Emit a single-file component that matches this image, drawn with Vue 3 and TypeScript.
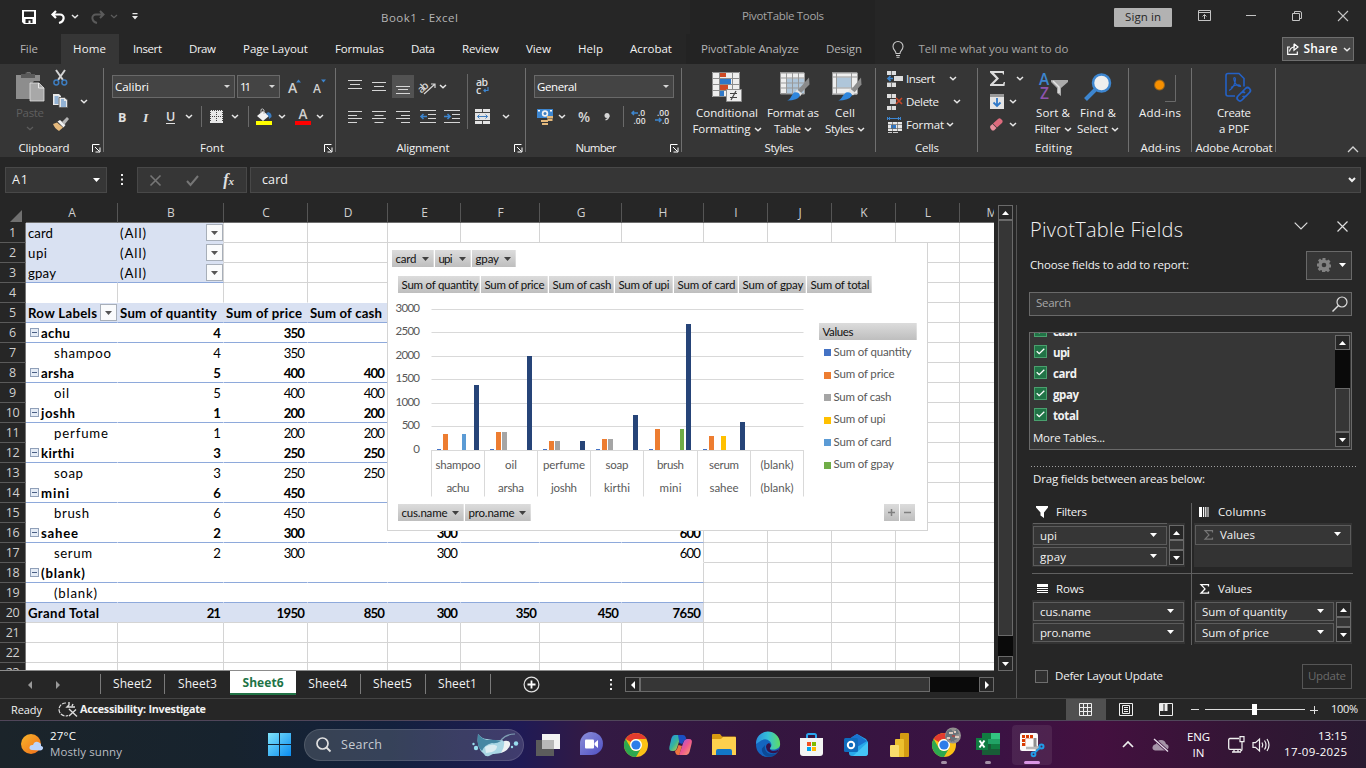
<script setup lang="ts">
import { h } from 'vue'
import type { FunctionalComponent, Directive } from 'vue'

/* Adjusts letter spacing so a label takes the given width in pixels. */
const vFit: Directive<HTMLElement, number> = {
  mounted(el, binding) {
    const len = (el.textContent || '').trim().length
    if (!binding.value || len < 2) return
    el.style.display = 'inline-block'
    el.style.whiteSpace = 'nowrap'
    const natural = el.getBoundingClientRect().width
    const ls = (binding.value - natural) / (len - 1)
    el.style.letterSpacing = ls + 'px'
    el.style.marginRight = -ls + 'px'
  },
}

const line = (d: string, c = '#d6d6d6', w = 1) => `<path d="${d}" fill="none" stroke="${c}" stroke-width="${w}"/>`
const chromeArt = `<circle cx="12" cy="12" r="12" fill="#fbc116"/><path d="M1.6 6A12 12 0 0 1 22.4 6H12a6 6 0 0 0-5.2 3z" fill="#e33b2e"/><path d="M1.6 6A12 12 0 0 0 12 24l5.2-9A6 6 0 0 1 6.8 15z" fill="#2da94f"/><circle cx="12" cy="12" r="6" fill="#fff"/><circle cx="12" cy="12" r="4.6" fill="#2f7de9"/>`

const icons: Record<string, [number, number, string]> = {
  save: [14, 14, '<path d="M0 0h14v14H2l-2-2z" fill="#fff"/><path d="M2 1.500h10V7H2zM3.500 9h7v4h-2v-2.500h-2V13h-3z" fill="#262626"/>'],
  undo: [15, 14, line('M5 1L1.500 4.500 5 8M2 4.500h7c5 0 5 7-1 8.500', '#fff', 2.2)],
  redo: [15, 14, line('M10 1l3.500 3.500L10 8M13 4.500H6c-5 0-5 7 1 8.500', '#5a5a5a', 2)],
  chev: [8, 5, line('M1 1l3 2.700L7 1', '#e8e8e8', 1.5)],
  chevDim: [8, 5, line('M1 1l3 2.700L7 1', '#5c5c5c', 1.3)],
  qat: [6, 7, '<path d="M.5 0h5v1.300h-5zM0 3h6L3 6.500z" fill="#e8e8e8"/>'],
  tri: [7, 4, '<path d="M0 0h7L3.500 4z" fill="#fff"/>'],
  triS: [6, 3, '<path d="M0 0h6L3 3z" fill="#d6d6d6"/>'],
  triUp: [7, 4, '<path d="M0 4h7L3.500 0z" fill="#fff"/>'],
  triL: [4, 8, '<path d="M4 0v8L0 4z" fill="#fff"/>'],
  triR: [4, 8, '<path d="M0 0v8l4-4z" fill="#fff"/>'],
  navL: [4, 8, '<path d="M4 0v8L0 4z" fill="#999"/>'],
  navR: [4, 8, '<path d="M0 0v8l4-4z" fill="#999"/>'],
  ribbonOpt: [13, 11, line('M.5.500h12v10H.5zM.5 2.500h12M6.500 9V4.500M4.500 6.500l2-2 2 2', '#c4c4c4')],
  min: [10, 2, line('M0 .5h10', '#c4c4c4')],
  restore: [10, 10, line('M.5 2.500h7v7h-7zM2.500 2V.5H8a1.500 1.500 0 0 1 1.500 1.500v5.500H8', '#c4c4c4')],
  close: [10, 10, line('M0 0l10 10M10 0L0 10', '#c4c4c4', 1.1)],
  bulb: [12, 17, line('M4 12.500C4 9.500 1 9 1 5.500a5 5 0 0 1 10 0c0 3.500-3 4-3 7zM4 14.500h4M4.500 16.200h3', '#c8c8c8', 1.1)],
  share: [12, 12, line('M3 4H.7v7.300h9.600V8.500M2.500 8.500C3 5.500 5 4 8 4M7 .700L11 4 7 7.300V.700', '#fff', 1.2)],
  paste: [28, 30, '<path d="M0 3h7V2h3l1-2h3l1 2h2v1h7v6h-6l-4 5v13H0z" fill="#8d8d8d"/><path d="M5 2h4.500V.5h5V2H19v4H5z" fill="#5a5a5a"/><path d="M14 11h9l5 5v13H14z" fill="#a8a8a8" stroke="#e0e0e0" stroke-width=".8"/><path d="M22.500 11v5H28" fill="none" stroke="#e8e8e8"/>'],
  cut: [15, 16, line('M3 0l7 10M12 0L5 10', '#d4d4d4', 2) + '<circle cx="3.300" cy="12.500" r="2.400" fill="none" stroke="#3d7dc0" stroke-width="1.500"/><circle cx="11.300" cy="12.500" r="2.400" fill="none" stroke="#3d7dc0" stroke-width="1.500"/>'],
  copy: [15, 14, '<path d="M0 0h6l2 2v9H0z" fill="#e8e8e8"/><path d="M1.500 3h4M1.500 5h4M1.500 7h4M1.500 9h4" stroke="#3d7dc0"/><path d="M6 3.500h5.500L14.500 6v7.500H6z" fill="#e8e8e8" stroke="#555" stroke-width=".8"/><path d="M8 6h3M8 8h5M8 10h5M8 12h5" stroke="#3d7dc0"/>'],
  brush: [16, 14, '<path d="M0 7l4-1.500 6 5L6 14C3 12 1 10 0 7z" fill="#e5b97c"/><path d="M4.500 4.500L7 3l5.500 5-2 2.500z" fill="#f0f0f0"/><path d="M9 5l5-5 2 2-4.500 5.500z" fill="#b5b5b5"/>'],
  launch: [9, 9, line('M.5 8V.5h7M3 3l4.500 4.500M8 3.500V8H3.500', '#fff', 1)],
  growA: [13, 17, '<text x="0" y="15" font-family="Open Sans" font-weight="600" font-size="14" fill="#d0d0d0">A</text><path d="M8 4.500l2.500-3 2.500 3z" fill="#3d86d0"/>'],
  shrinkA: [13, 17, '<text x="0" y="15" font-family="Open Sans" font-weight="600" font-size="12" fill="#d0d0d0">A</text><path d="M8 1.500h5l-2.500 3z" fill="#3d86d0"/>'],
  bold: [9, 14, '<text x="0" y="11.500" font-family="Open Sans" font-weight="700" font-size="12.500" fill="#e0e0e0">B</text>'],
  italic: [8, 14, '<text x="0" y="11.500" font-family="Liberation Serif" font-style="italic" font-weight="700" font-size="13.500" fill="#e0e0e0" textLength="6.500">I</text>'],
  underline: [9, 16, '<text x="0" y="11.500" font-family="Open Sans" font-weight="600" font-size="12.500" fill="#e0e0e0">U</text><path d="M0 14.500h9" stroke="#e0e0e0"/>'],
  sepS: [1, 21, '<path d="M.5 0v21" stroke="#6a6a6a"/>'],
  borders: [14, 14, '<path d="M0 0h13v13H0z" fill="#e8e8e8"/><path d="M0 .5h14M6.500 0v12M0 6.500h13M.5 0v12M12.500 0v12" stroke="#444" stroke-dasharray="1 1"/>'],
  fill: [16, 17, '<path d="M7 3l6 5-6 5-6-5z" fill="#f2f2f2"/><path d="M5 5V1.500Q6.500 0 8 2v4" fill="none" stroke="#bbb"/><path d="M12 4q4 1 3.500 5l-2.500 2q0-4-3-5z" fill="#3d7dc0"/><path d="M0 13h16v4H0z" fill="#ff0"/>'],
  fontColor: [16, 17, '<text x="3.500" y="11" font-family="Open Sans" font-weight="600" font-size="13.500" fill="#d0d0d0">A</text><path d="M0 13h16v4H0z" fill="#f00"/>'],
  alTop: [14, 14, line('M0 .5h14M2 4.500h10M0 8.500h14')],
  alMid: [14, 10, line('M0 .5h14M2 4.500h10M0 8.500h14')],
  alBot: [22, 23, '<path d="M0 0h22v23H0z" fill="#525252"/>' + line('M4 11.500h14M6 14.500h10M4 18.500h14')],
  orient: [16, 16, '<text transform="rotate(-42 5 10)" x="-1" y="11" font-family="Open Sans" font-weight="600" font-size="10.500" fill="#d6d6d6" textLength="11">ab</text>' + line('M4 15L15 5M11 5h4v4', '#d6d6d6', 1.2)],
  alLeft: [14, 12, line('M0 .5h14M0 4.500h9M0 7.500h14M0 11.500h9')],
  alCenter: [14, 12, line('M0 .5h14M2.500 4.500h9M0 7.500h14M2.500 11.500h9')],
  alRight: [14, 12, line('M0 .5h14M5 4.500h9M0 7.500h14M5 11.500h9')],
  outdent: [16, 14, line('M0 .5h16M8 4.500h8M8 8.500h8M0 12.500h16') + line('M7 6.500H1M3.500 4L1 6.500 3.500 9', '#3d86d0', 1.6)],
  indent: [16, 14, line('M0 .5h16M8 4.500h8M8 8.500h8M0 12.500h16') + line('M0 6.500h6M3.500 4L6 6.500 3.500 9', '#3d86d0', 1.6)],
  wrap: [14, 20, '<text x="0" y="9" font-family="Open Sans" font-weight="600" font-size="10.500" fill="#dedede" textLength="12">ab</text><text x="0" y="16.500" font-family="Open Sans" font-weight="600" font-size="10.500" fill="#dedede">c</text>' + line('M12 10v3.500H8M9.500 12L8 13.500 9.500 15', '#3d86d0', 1.2)],
  merge: [15, 15, '<path d="M0 0h15v15H0z" fill="#e4e4e4"/>' + line('M0 3.500h15M0 11.500h15M7.500 0v3M7.500 12v3', '#444') + line('M2.500 7.500h10M4.500 5.500l-2 2 2 2M10.500 5.500l2 2-2 2', '#3d7dc0')],
  currency: [16, 16, '<path d="M0 0h16v9H0z" fill="#3d86d0"/><circle cx="8" cy="4.500" r="3.200" fill="#f2f2f2"/><circle cx="8" cy="4.500" r="1.500" fill="#3d7dc0"/><path d="M1 1h2v1.500H1zM13 1h2v1.500h-2z" fill="#fff"/><path d="M10 7h6v2.500h-6zM10.500 10h5v2h-5zM4 11h7v2H4zM5 14h6v2H5z" fill="#e5b97c"/>'],
  percent: [13, 15, '<text x="0" y="12.500" font-family="Open Sans" font-weight="600" font-size="14" fill="#d6d6d6">%</text>'],
  comma: [6, 8, '<circle cx="3" cy="2.500" r="2.500" fill="#d6d6d6"/><path d="M5 2.500Q5 5.500 1.500 7" stroke="#d6d6d6" stroke-width="1.300" fill="none"/>'],
  decInc: [16, 18, line('M7 5H1M3 3L1 5l2 2', '#3d86d0', 1.5) + '<g font-family="Open Sans" font-size="8.500" fill="#e2e2e2" font-weight="600"><text x="7" y="8">.0</text><text x="2.500" y="15.500">.00</text></g>'],
  decDec: [16, 18, line('M0 12h6M4 10l2 2-2 2', '#3d86d0', 1.5) + '<g font-family="Open Sans" font-size="8.500" fill="#e2e2e2" font-weight="600"><text x="2" y="8">.00</text><text x="7" y="15.500">.0</text></g>'],
  condFmt: [30, 30, '<path d="M0 0h28v25H0z" fill="#eee"/><path d="M8 0h6v5H8zM8 13h8v5H8z" fill="#cf4a25"/><path d="M8 7h11v5H8zM8 19h4v6H8z" fill="#2f78c8"/>' + line('M.5.500h27v24H.5zM0 6.500h28M0 12.500h28M0 18.500h28M7.500 0v25M20.500 0v25', '#8c8c8c') + '<path d="M14.500 17.500h15v12h-15z" fill="#eee" stroke="#8c8c8c"/>' + line('M18 21.500h7M18 25.500h7M24 19l-5 9', '#444', 1.2)],
  fmtTable: [30, 29, '<path d="M0 0h24v21H0z" fill="#eee"/><path d="M6 6h18v15H6z" fill="#afc6da"/>' + line('M.5.500h24v21H.5zM0 5.500h24M0 10.500h24M0 15.500h24M6.500 0v21M12.500 0v21M18.500 0v21', '#999') + '<path d="M29 5l.5 7-9 9-3-3z" fill="#8b8b8b"/><path d="M17 17l5 4-2 3-5-4z" fill="#e4e4e4"/><path d="M7 28c4-1 4-5 7-8q5-1 6 3-2 5-13 5z" fill="#2f86dc"/>'],
  cellStyles: [30, 29, '<path d="M0 0h25v22H0z" fill="#eee"/><path d="M5 5h15v10H5z" fill="#afc6da"/>' + line('M.5.500h25v21H.5zM0 4.500h25M0 15.500h25M4.500 0v21M19.500 0v21', '#999') + '<path d="M29 5l.5 7-8 9-3-3z" fill="#8b8b8b"/><path d="M18 16l5 4-2 3-5-4z" fill="#e4e4e4"/><path d="M6 28c4-1 4-5 8-8q5-1 6 3-3 5-14 5z" fill="#2f86dc"/>'],
  insert: [16, 16, '<path d="M0 0h9v4H0zM0 12h9v4H0zM7 5h9v5H7z" fill="#dedede"/>' + line('M4.500 0v4M4.500 12v4M0 11.500h9', '#777') + line('M6 7.500H1M3.500 5L1 7.500 3.500 10', '#3d86d0', 1.7)],
  del: [16, 16, '<path d="M0 0h9v4H0zM0 12h9v4H0z" fill="#dedede"/><path d="M3 5h6v5H3z" fill="#c8ccd0"/>' + line('M4.500 0v4M4.500 12v4', '#777') + line('M9 4l6 6M15 4l-6 6', '#c5472a', 1.7)],
  format: [16, 16, '<path d="M1 5h14v9H1z" fill="#e6e6e6"/><path d="M4 8h5v4H4z" fill="#2f78c8"/>' + line('M1 7.500h14M1 11.500h14M5.500 5v9M10.500 5v9', '#666', .7) + line('M1 1.500h12M.5 0v3M13.500 0v3M3 0L1.500 1.500 3 3M11 0l1.500 1.500L11 3', '#3d86d0') + line('M1 15.500h4M6 15.500h5', '#ccc')],
  sigma: [15, 15, '<path d="M0 0h14v3.500h-1L12.500 2H4l5 5.500-5.500 5.500H13l.8-2H15l-.5 4H0v-1.500l6-6-6-6z" fill="#dcdcdc"/>'],
  fillDown: [14, 15, '<path d="M0 0h14v15H0z" fill="#e4e4e4"/><path d="M0 0h14v3H0z" fill="#999"/>' + line('M7 4v8M3.500 8.500L7 12l3.500-3.500', '#2f78c8', 1.8)],
  eraser: [13, 13, '<path d="M8 1q1.500-1.500 3 0l1.500 1.500Q13 4 12 5L7 9.500 3 5.500z" fill="#dd6b7d"/><path d="M2.500 6L6.500 10 4 12.500H2L.2 10V8z" fill="#e8909d"/>'],
  sort: [29, 30, '<g font-family="Open Sans" font-weight="600" font-size="15.500"><text x="0" y="13" fill="#3d86d0">A</text><text x="1" y="27" fill="#8d54ad">Z</text></g><path d="M12 8h17v2l-7 6v8l-4-3v-5l-6-6z" fill="#ababab"/>' + line('M14 9l6 6v6', '#e4e4e4', 1.5)],
  find: [28, 28, line('M12 16L1.500 26.500', '#3d86d0', 4) + '<circle cx="17.500" cy="10" r="8.500" fill="#eee" stroke="#3d86d0" stroke-width="2.500"/>'],
  addins: [34, 30, '<defs><radialGradient id="dot"><stop offset=".65" stop-color="#f79000"/><stop offset="1" stop-color="#f79000" stop-opacity="0"/></radialGradient></defs><circle cx="16.500" cy="13" r="6" fill="url(#dot)"/>' + line('M32.500 3v26.500H22', '#6a6a6a')],
  pdf: [26, 29, line('M10 23.500H3Q1 23.500 1 21.500V3Q1 1 3 1h11l5 5v8', '#2461c5', 1.6) + line('M4 18q4-2 6-8 1-5-.5-5t0 4q2 5 6 5 0-2-4-1.500-4 1-5.500 2.500', '#2461c5', 1.2) + line('M17 19.500l3.500-3.500q2-2 4 0t0 4l-3.500 3.500q-2 1.500-3.500 0M20 20.500q-2-2-4 0l-3 3q-2 2 0 4t4 0l3-3', '#2461c5', 1.7)],
  caret: [12, 7, line('M1 6l5-5 5 5', '#d4d4d4', 1.3)],
  dots: [3, 12, '<path d="M0 0h2v2H0zM0 4.500h2v2H0zM0 9h2v2H0z" fill="#eee"/>'],
  fxX: [11, 11, line('M.5.500l10 10M10.500.500l-10 10', '#767676', 1.6)],
  fxOk: [13, 11, line('M1 6l3.500 4L12 1', '#767676', 2)],
  chevBold: [8, 6, line('M1 1l3 3 3-3', '#eee', 2)],
  panelChev: [14, 8, line('M.7.700L7 7 13.300.700', '#ddd', 1.2)],
  panelX: [11, 11, line('M.5.500l10 10M10.500.500l-10 10', '#ddd', 1.2)],
  gear: [14, 14, '<path d="M5.500 0h3v2l1.500.600 1.500-1.200 2 2-1.200 1.600.500 1.500H14v3h-1.500l-.7 1.300 1.200 1.400-2 2-1.500-1.200-1.500.500V14h-3v-1.500L4 12l-1.500 1L.7 11 2 9.500 1.500 8.500H0v-3h1.500L2.200 4 1 2.500l2-2L4.500 2l1-.5z" fill="#828282"/><circle cx="7" cy="7" r="2.300" fill="#363636"/>'],
  mag: [16, 16, '<circle cx="10" cy="6" r="5" fill="none" stroke="#ddd" stroke-width="1.200"/>' + line('M6.500 9.500L.5 15.500', '#ddd', 1.4)],
  check: [9, 7, line('M.7 3.200L3.200 5.700 8.300.700', '#fff', 1.3)],
  funnel: [12, 12, '<path d="M0 0h12v1.500L8 6.500V12L4.500 9.500v-3L0 1.500z" fill="#fff"/>'],
  cols: [10, 10, '<path d="M0 0h3v10H0zM4 0h1.200v10H4zM6.200 0h1.200v10H6.200zM8.500 0h1v10h-1z" fill="#fff"/>'],
  rowsI: [11, 10, '<path d="M0 0h11v3H0zM0 4h11v1H0zM0 6h11v1H0zM0 8h11v1H0z" fill="#fff"/>'],
  sig: [9, 10, line('M8.500 2.500V.7H1l4 4.200-4 4.300h7.500V7.400', '#fff', 1.3)],
  sigDim: [9, 10, line('M8.500 2.500V.7H1l4 4.200-4 4.300h7.500V7.400', '#777', 1.2)],
  plusCircle: [17, 17, '<circle cx="8.500" cy="8.500" r="7.400" fill="none" stroke="#e0e0e0" stroke-width="1.200"/>' + line('M8.500 4.500v8M4.500 8.500h8', '#fff', 1.8)],
  access: [17, 15, '<path d="M5 1a6.500 6.500 0 1 0 2 12.500" fill="none" stroke="#ddd" stroke-dasharray="4 1.200" stroke-width="1.200"/>' + line('M8 0v3l-2 2h8M8 7l8 7.500M15 7.500L8 14M12 2l-1 2', '#ddd', 1.4)],
  vGrid: [13, 13, line('M.5.500h12v12H.5zM4.500 0v13M8.500 0v13M0 4.500h13M0 8.500h13', '#eee')],
  vPage: [14, 13, line('M.5.500h13v12H.5zM3.500 2.500h7v8h-7zM5 4.500h4M5 6.500h4M5 8.500h4', '#eee')],
  vBreak: [14, 13, line('M.5.500h13v12H.5z', '#eee') + '<path d="M1 1h3.500v7H1zM5.500 1h3v7h-3z" fill="#eee"/>'],
  minus: [8, 2, line('M0 .5h8', '#ddd')],
  plus: [8, 8, line('M0 4.500h8M4.500 0v8', '#ddd')],
  weather: [22, 21, '<defs><linearGradient id="sun" y2="1"><stop stop-color="#f9b52a"/><stop offset="1" stop-color="#ef6c1a"/></linearGradient></defs><circle cx="10" cy="10" r="10" fill="url(#sun)"/><path d="M11 16q-3-.5-2.500-3t3.500-2q1.500-4 5-3t3 4q2.500.500 2 2.500t-3 2z" fill="#bcd4fb"/>'],
  start: [23, 23, '<defs><linearGradient id="win" x2="1" y2="1"><stop stop-color="#7fe4fb"/><stop offset="1" stop-color="#0a8cf0"/></linearGradient></defs><path d="M0 0h11v11H0zM12 0h11v11H12zM0 12h11v11H0zM12 12h11v11H12z" fill="url(#win)"/>'],
  search: [15, 15, '<circle cx="6.500" cy="6.500" r="5.500" fill="none" stroke="#e0e0e0" stroke-width="1.700"/>' + line('M10.500 10.500l4 4', '#e0e0e0', 1.8)],
  manta: [48, 24, '<path d="M6 1q4 5 9 5 9 2 15 1l4 3q4 0 4 1-3 6-9 9-6 1-8 1l-4 2q-4 1-5-2Q4 15 6 1z" fill="#a9d6e4"/><path d="M6 1q4 5 9 6 6-1 14 1-5 3-9 2Q12 12 10 18 4 14 6 1z" fill="#4587a3"/><path d="M32 8q7-1 6 4t-9 8q4-6 3-12z" fill="#eef2f3"/><path d="M13 14q7-4 12-1 0 4-5 6l-6 1z" fill="#dcecf1"/>' + line('M29 7q5-6 14-6', '#7f9fb4', 1.2) + '<circle cx="1.500" cy="11" r="1.200" fill="#9de"/><circle cx="4" cy="15" r="2.200" fill="#9de"/><circle cx="44" cy="10.500" r="2.200" fill="#9de"/><circle cx="40" cy="14" r="1.200" fill="#9de"/>'],
  taskview: [24, 22, '<path d="M0 6h18v16H0z" fill="#5c5c5c"/><path d="M6 0h18v15H6z" fill="#f2f2f2"/><path d="M6 6h12v9H6z" fill="#b8b8b8"/>'],
  chat: [23, 23, '<defs><linearGradient id="cht" y2="1"><stop stop-color="#8c8fd8"/><stop offset="1" stop-color="#4f50c4"/></linearGradient></defs><path d="M0 22V11.500A11.500 11.500 0 1 1 11.500 22z" fill="url(#cht)"/><rect x="5" y="6.500" width="9" height="9" rx="1" fill="#fff"/><path d="M14.500 10L18 7v8l-3.500-3z" fill="#fff"/>'],
  chrome: [24, 24, chromeArt],
  copilot: [23, 22, '<defs><linearGradient id="cpa" y2="1"><stop stop-color="#1f8ff0"/><stop offset=".5" stop-color="#38b59a"/><stop offset="1" stop-color="#f5d21a"/></linearGradient><linearGradient id="cpb" y2="1"><stop stop-color="#8a5cf0"/><stop offset=".5" stop-color="#ee5590"/><stop offset="1" stop-color="#fba765"/></linearGradient></defs><path d="M5.500 1H12L8 14q-1 3-3.500 3H3Q-.5 17 .5 12.500L2.500 4Q3.500 1 5.500 1z" fill="url(#cpa)"/><path d="M17.500 21H10l4.500-13q1-3 3.500-3h2q4 0 2.500 5L20.500 18q-1 3-3 3z" fill="url(#cpb)"/><path d="M9 1h5q2 0 2.700 2l.6 2q-2 .500-3 3l-1 2-3-1z" fill="#1a4fc4"/><path d="M6 17q1.500-.5 2.500-3l1-3 3.500 1-2.500 8-.5 1H9q-2 0-2.500-2z" fill="#ef7440"/>'],
  folder: [24, 22, '<path d="M0 1q0-1 1-1h7l2 2.500h13q1 0 1 1V8H0z" fill="#d99a10"/><path d="M0 5h9l2-2h12q1 0 1 1v17H0z" fill="#fdd04d"/><path d="M4 21v-4q0-2 2-2h12q2 0 2 2v4z" fill="#1277c8"/>'],
  edge: [24, 24, '<defs><linearGradient id="edg" x2="1"><stop stop-color="#2a8ee0"/><stop offset=".5" stop-color="#35c1d8"/><stop offset="1" stop-color="#5fdc62"/></linearGradient></defs><circle cx="12" cy="12" r="12" fill="#1465bf"/><path d="M0 11A12 12 0 0 1 24 10q1 5-5 6.500-5 .500-5-1.500 3-3 0-6.500Q9 4 3 9z" fill="url(#edg)"/><path d="M9 12q-1 6 4 8.500 5 1 8-.500-4 5-10 3.500-6-3-5-8z" fill="#0c4a96"/><path d="M14 15q-1 2 3 3 4 0 6-2-1 4-4 4-8 1-9-6 0-3 3-4 3 2 1 5z" fill="#35124a"/>'],
  store: [23, 24, line('M7 6V2.500Q7 1 8.500 1h6Q16 1 16 2.500V6', '#2aa6ee', 2) + '<path d="M0 5h23v15q0 3-3 3H3q-3 0-3-3z" fill="#f4f4f4"/><path d="M7 9h4v4H7z" fill="#f25022"/><path d="M12 9h4v4h-4z" fill="#7fba00"/><path d="M7 14h4v4H7z" fill="#00a4ef"/><path d="M12 14h4v4h-4z" fill="#ffb900"/>'],
  outlook: [24, 22, '<path d="M5 5l8-5 9 5 2 3v11q0 3-3 3H8q-3 0-3-3z" fill="#28a8ea"/><path d="M13 0l10 7-15 9V3z" fill="#1a73cf"/><path d="M24 8v11q0 3-3 3H9z" fill="#44c4f6"/><rect y="4" width="14" height="14" rx="1.500" fill="#0f6cbd"/><circle cx="7" cy="11" r="3.200" fill="none" stroke="#fff" stroke-width="2"/>'],
  powerbi: [19, 24, '<path d="M10 1q0-1 1-1h7q1 0 1 1v22q0 1-1 1h-8z" fill="#d39b12"/><path d="M5 7q0-1 1-1h7q1 0 1 1v17H5z" fill="#edc02e"/><path d="M0 13q0-1 1-1h7q1 0 1 1v11H1q-1 0-1-1z" fill="#f9dc6c"/>'],
  chromeUser: [30, 30, '<g transform="translate(0 6)">' + chromeArt + '</g><circle cx="21" cy="8.500" r="8" fill="#93908f"/><path d="M15 4l4-2 2 3 4-3 2 5-4 1 2 4-6 3-2-5-4 1zM17 13l3-2 3 4z" fill="#68737b"/><path d="M17 5h4v2h-4zM23 9h4v2h-4zM15 10h3v2h-3zM22 4h2v2h-2z" fill="#dccabf"/><path d="M20 8h3v2h-3zM17 12h2v1h-2z" fill="#a05050"/>'],
  excel: [24, 22, '<path d="M6 0h18v22H6z" fill="#21a366"/><path d="M6 0h9v6H6z" fill="#107c41"/><path d="M15 0h9v6h-9z" fill="#33c481"/><path d="M6 11h18v11H6z" fill="#185c37"/><path d="M15 11h9v5h-9z" fill="#107c41"/><path d="M0 5h12v12H0z" fill="#107c41"/>' + line('M3.500 7.500l5 7M8.500 7.500l-5 7', '#fff', 2)],
  snip: [25, 24, '<rect width="18" height="18" rx="2" fill="#fafafa"/><path d="M2 2h3v3H2zM6 2h3v3H6zM10 2h3v3h-3zM2 6h3v3H2zM2 10h3v3H2z" fill="#d83b01"/><path d="M5 5h8v1H6v7H5z" fill="#eeb8a4"/>' + line('M15 5v8l3 4', '#8f8f8f', 3) + line('M6 15h9l4-1', '#b8b8b8', 2.5) + '<circle cx="21.500" cy="13.500" r="2" fill="none" stroke="#209ce8" stroke-width="2"/><circle cx="13.500" cy="21.300" r="1.900" fill="none" stroke="#209ce8" stroke-width="2"/>' + line('M15 19.500l2.500-2.500 2.500-2', '#209ce8', 1.8)],
  trayUp: [12, 7, line('M1 6l5-5 5 5', '#eee', 1.7)],
  cloud: [17, 14, '<path d="M3 12.500q-3-1-2.500-3.500T4 6q1-4 5-4t5 4q3 .500 2.500 3.500T13 12.500z" fill="#a594a8"/>' + line('M2 1l14 12.500', '#3f1040', 3) + line('M2 1l14 12.500', '#e8e0ea', 1.3)],
  net: [17, 17, line('M11 2.500H2Q.7 2.500.7 4v8Q.7 13.300 2 13.300h11M6 13.500V16M10 13.500V16M4 16h9', '#f0f0f0', 1.3) + line('M12 .7h4v5h-4zM14 6v7q0 2-2 2', '#f0f0f0', 1.2)],
  vol: [18, 14, line('M1 4.700h2.500L7.500 1v12L3.500 9.300H1z', '#f0f0f0', 1.2) + line('M10 4.500q1.500 2.500 0 5M12.500 2.500q3 4.500 0 9M15 1q4 6 0 12', '#f0f0f0', 1.2)],
}

/* One drawing from the icon table; `g` is the gap to the item before it. */
const Ic: FunctionalComponent<{ n: string; g?: number }> = (p) => {
  const [w, hh, body] = icons[p.n]
  return h('svg', { width: w, height: hh, viewBox: `0 0 ${w} ${hh}`, innerHTML: body, style: { marginLeft: (p.g || 0) + 'px', flex: 'none', display: 'block', overflow: 'visible' } })
}
Ic.props = ['n', 'g']

const tabs: [string, number][] = [['Insert', 29], ['Draw', 27], ['Page Layout', 65], ['Formulas', 49], ['Data', 24], ['Review', 37], ['View', 25], ['Help', 25], ['Acrobat', 42]]

const colNames = 'ABCDEFGHIJKLM'.split('')
const colW = [92, 106, 84, 80, 73, 79, 82, 82, 64, 64, 64, 64, 64]

interface Cell { t?: string; w?: number }
type Row = Record<number, Cell>
const c = (t: string, w?: number): Cell => ({ t, w })
const n = (t: string | number): Cell => ({ t: String(t), w: String(t).length * 7.1 })
const data: Record<number, Row> = {
  1: { 0: c('card', 25), 1: c('(All)', 26) },
  2: { 0: c('upi', 19), 1: c('(All)', 26) },
  3: { 0: c('gpay', 28), 1: c('(All)', 26) },
  5: { 0: c('Row Labels', 69), 1: c('Sum of quantity', 97), 2: c('Sum of price', 76), 3: c('Sum of cash', 72) },
  6: { 0: c('achu', 29), 1: n(4), 2: n(350) },
  7: { 0: c('shampoo', 57), 1: n(4), 2: n(350) },
  8: { 0: c('arsha', 33), 1: n(5), 2: n(400), 3: n(400) },
  9: { 0: c('oil', 15), 1: n(5), 2: n(400), 3: n(400) },
  10: { 0: c('joshh', 34), 1: n(1), 2: n(200), 3: n(200) },
  11: { 0: c('perfume', 54), 1: n(1), 2: n(200), 3: n(200) },
  12: { 0: c('kirthi', 33), 1: n(3), 2: n(250), 3: n(250) },
  13: { 0: c('soap', 29), 1: n(3), 2: n(250), 3: n(250) },
  14: { 0: c('mini', 28), 1: n(6), 2: n(450) },
  15: { 0: c('brush', 35), 1: n(6), 2: n(450) },
  16: { 0: c('sahee', 37), 1: n(2), 2: n(300), 4: n(300), 7: n(600) },
  17: { 0: c('serum', 38), 1: n(2), 2: n(300), 4: n(300), 7: n(600) },
  18: { 0: c('(blank)', 44) },
  19: { 0: c('(blank)', 43) },
  20: { 0: c('Grand Total', 71), 1: n(21), 2: n(1950), 3: n(850), 4: n(300), 5: n(350), 6: n(450), 7: n(7650) },
}
const isGroup = (r: number) => r >= 6 && r <= 18 && r % 2 === 0
const isItem = (r: number) => r >= 7 && r <= 19 && r % 2 === 1
function cellClass(r: number, k: number) {
  const pivot = k < 8 && r >= 5 && r <= 20
  const filter = k < 2 && r <= 3
  return {
    blue: filter || (k < 8 && (r === 5 || r === 20)),
    open: (pivot && k < 7) || (filter && k === 0),
    rule: (filter && r === 3) || (k < 8 && (r === 5 || isGroup(r) || r === 19)),
    nob: (filter && r < 3) || (k < 8 && r === 4) || (k < 8 && isItem(r) && r < 19),
    bold: pivot && (isGroup(r) || r === 5 || r === 20),
    num: k > 0 && r > 5,
    item: k === 0 && isItem(r),
  }
}

const fieldBtns = [
  { t: 'card', x: 392, e: 434, tx: 395.5, tw: 21, tri: 425.5, y: 250 },
  { t: 'upi', x: 435, e: 471, tx: 438.5, tw: 14, tri: 462.5, y: 250 },
  { t: 'gpay', x: 472, e: 516, tx: 475.5, tw: 23.5, tri: 507.5, y: 250 },
  { t: 'Sum of quantity', x: 398, e: 480, tx: 401.5, tw: 77, tri: 0, y: 276 },
  { t: 'Sum of price', x: 481, e: 548, tx: 484.5, tw: 60, tri: 0, y: 276 },
  { t: 'Sum of cash', x: 549, e: 614, tx: 552.5, tw: 59, tri: 0, y: 276 },
  { t: 'Sum of upi', x: 615, e: 673, tx: 618.5, tw: 51, tri: 0, y: 276 },
  { t: 'Sum of card', x: 674, e: 738, tx: 677.5, tw: 58, tri: 0, y: 276 },
  { t: 'Sum of gpay', x: 739, e: 806, tx: 742.5, tw: 61, tri: 0, y: 276 },
  { t: 'Sum of total', x: 807, e: 872, tx: 810.5, tw: 59, tri: 0, y: 276 },
  { t: 'Values', x: 819, e: 917, tx: 822.5, tw: 31, tri: 0, y: 323 },
  { t: 'cus.name', x: 398, e: 464, tx: 401.5, tw: 46, tri: 455.5, y: 504 },
  { t: 'pro.name', x: 465, e: 531, tx: 468.5, tw: 46, tri: 522.5, y: 504 },
]
const axis = [3000, 2500, 2000, 1500, 1000, 500, 0]
const axisY = [309, 332, 356, 379, 403, 426, 450]
const edges = [431, 484, 537, 590, 643, 697, 750, 803]
const cats: [string, number, string, number][] = [['shampoo', 45, 'achu', 23], ['oil', 12, 'arsha', 26], ['perfume', 42, 'joshh', 26], ['soap', 23, 'kirthi', 26], ['brush', 27, 'mini', 22], ['serum', 30, 'sahee', 29], ['(blank)', 33, '(blank)', 33]]
const colors = ['#4472c4', '#ed7d31', '#a5a5a5', '#ffc000', '#5b9bd5', '#70ad47', '#264478']
const series = [
  [20, 350, 0, 0, 350, 0, 1390],
  [20, 390, 390, 0, 0, 0, 2000],
  [20, 200, 200, 0, 0, 0, 200],
  [20, 240, 240, 0, 0, 0, 750],
  [20, 450, 0, 0, 0, 450, 2690],
  [20, 300, 0, 300, 0, 0, 600],
]
const offsets = [6, 12, 18, 24, 31, 37, 43]
const bars = series.flatMap((vals, g) => vals.map((v, s) => ({
  x: edges[g] + offsets[s], w: s === 0 || s === 4 || s === 5 ? 4 : 5, hh: Math.round(v * 0.047), f: colors[s],
}))).filter((b) => b.hh > 0)
const legend: [string, number][] = [['Sum of quantity', 78], ['Sum of price', 61], ['Sum of cash', 58], ['Sum of upi', 52], ['Sum of card', 58], ['Sum of gpay', 60.5]]

const sheets: [string, number][] = [['Sheet2', 39], ['Sheet3', 39], ['Sheet6', 41], ['Sheet4', 39], ['Sheet5', 39], ['Sheet1', 39]]
const fields: [string, number][] = [['cash', 24], ['upi', 17], ['card', 24], ['gpay', 26], ['total', 26]]
</script>

<template>
  <div class="screen">
    <header class="title">
      <div class="quick">
        <Ic n="save" /><Ic n="undo" :g="15" /><Ic n="chev" :g="5" /><Ic n="redo" :g="11" /><Ic n="chevDim" :g="5" /><Ic n="qat" :g="14" />
      </div>
      <div class="book"><span v-fit="77" class="pre">Book1  -  Excel</span></div>
      <div class="tools"><span v-fit="82">PivotTable Tools</span></div>
      <button class="signin"><span v-fit="36">Sign in</span></button>
      <div class="win"><Ic n="ribbonOpt" /><Ic n="min" :g="35" /><Ic n="restore" :g="36" /><Ic n="close" :g="36" /></div>
    </header>

    <nav class="tabs">
      <div class="tab file"><span v-fit="18">File</span></div>
      <div class="tab home"><span v-fit="33">Home</span></div>
      <div v-for="t in tabs" :key="t[0]" class="tab"><span v-fit="t[1]">{{ t[0] }}</span></div>
      <div class="tab ctx first"><span v-fit="98">PivotTable Analyze</span></div>
      <div class="tab ctx"><span v-fit="36">Design</span></div>
      <div class="tell"><Ic n="bulb" /><span v-fit="150">Tell me what you want to do</span></div>
      <button class="share"><Ic n="share" /><b v-fit="34">Share</b><Ic n="chev" :g="6" /></button>
    </nav>

    <section class="ribbon">
      <div class="group g-clip">
        <div class="gbody row">
          <div class="pastecol"><Ic n="paste" /><span v-fit="28" class="dim">Paste</span><Ic n="chevDim" /></div>
          <div class="clipcol">
            <Ic n="cut" />
            <div class="line"><Ic n="copy" /><Ic n="chev" :g="12" /></div>
            <Ic n="brush" />
          </div>
        </div>
        <div class="glabel"><span v-fit="51">Clipboard</span><i><Ic n="launch" /></i></div>
      </div>

      <div class="group g-font">
        <div class="gbody">
          <div class="line r1">
            <div class="select s-font"><span v-fit="34">Calibri</span><Ic n="triS" /></div>
            <div class="select s-size"><span v-fit="11">11</span><Ic n="triS" /></div>
            <Ic n="growA" :g="8" /><Ic n="shrinkA" :g="12" />
          </div>
          <div class="line r2">
            <Ic n="bold" :g="6" /><Ic n="italic" :g="16" /><Ic n="underline" :g="15" /><Ic n="chev" :g="10" /><Ic n="sepS" :g="8" />
            <Ic n="borders" :g="8" /><Ic n="chev" :g="7" /><Ic n="sepS" :g="9" />
            <Ic n="fill" :g="7" /><Ic n="chev" :g="6" /><Ic n="fontColor" :g="9" /><Ic n="chev" :g="5" />
          </div>
        </div>
        <div class="glabel"><span v-fit="24">Font</span><i><Ic n="launch" /></i></div>
      </div>

      <div class="group g-align">
        <div class="gbody row">
          <div class="alignL">
            <div class="line r1"><Ic n="alTop" /><Ic n="alMid" :g="10" /><Ic n="alBot" :g="6" /><Ic n="orient" :g="6" /><Ic n="chev" :g="3" /></div>
            <div class="line r2"><Ic n="alLeft" /><Ic n="alCenter" :g="10" /><Ic n="alRight" :g="10" /><Ic n="outdent" :g="10" /><Ic n="indent" :g="8" /></div>
          </div>
          <div class="tallsep"></div>
          <div class="alignR">
            <div class="line r1"><Ic n="wrap" :g="1" /></div>
            <div class="line r2"><Ic n="merge" /><Ic n="chev" :g="12" /></div>
          </div>
        </div>
        <div class="glabel"><span v-fit="53">Alignment</span><i><Ic n="launch" /></i></div>
      </div>

      <div class="group g-num">
        <div class="gbody">
          <div class="line r1"><div class="select s-num"><span v-fit="40">General</span><Ic n="triS" /></div></div>
          <div class="line r2"><Ic n="currency" :g="3" /><Ic n="chev" :g="5" /><Ic n="percent" :g="12" /><Ic n="comma" :g="13" /><Ic n="sepS" :g="13" /><Ic n="decInc" :g="7" /><Ic n="decDec" :g="8" /></div>
        </div>
        <div class="glabel"><span v-fit="41">Number</span><i><Ic n="launch" /></i></div>
      </div>

      <div class="group g-styles">
        <div class="gbody row">
          <div class="big b1"><Ic n="condFmt" /><span v-fit="62">Conditional</span><p><span v-fit="58">Formatting</span><Ic n="chev" :g="3" /></p></div>
          <div class="big b2"><Ic n="fmtTable" :g="3" /><span v-fit="52">Format as</span><p><span v-fit="27">Table</span><Ic n="chev" :g="3" /></p></div>
          <div class="big b3"><Ic n="cellStyles" :g="3" /><span v-fit="20">Cell</span><p><span v-fit="29">Styles</span><Ic n="chev" :g="3" /></p></div>
        </div>
        <div class="glabel"><span v-fit="29">Styles</span></div>
      </div>

      <div class="group g-cells">
        <div class="gbody cellrows">
          <div class="line"><Ic n="insert" /><span v-fit="29">Insert</span><Ic n="chev" :g="14" /></div>
          <div class="line"><Ic n="del" /><span v-fit="33">Delete</span><Ic n="chev" :g="14" /></div>
          <div class="line"><Ic n="format" /><span v-fit="38">Format</span><Ic n="chev" :g="2" /></div>
        </div>
        <div class="glabel"><span v-fit="24">Cells</span></div>
      </div>

      <div class="group g-edit">
        <div class="gbody row">
          <div class="editrows">
            <div class="line"><Ic n="sigma" /><Ic n="chev" :g="11" /></div>
            <div class="line"><Ic n="fillDown" /><Ic n="chev" :g="5" /></div>
            <div class="line"><Ic n="eraser" /><Ic n="chev" :g="6" /></div>
          </div>
          <div class="big b4"><Ic n="sort" :g="1" /><span v-fit="34">Sort &amp;</span><p><span v-fit="26">Filter</span><Ic n="chev" :g="3" /></p></div>
          <div class="big b5"><Ic n="find" :g="-1" /><span v-fit="36">Find &amp;</span><p><span v-fit="31">Select</span><Ic n="chev" :g="3" /></p></div>
        </div>
        <div class="glabel"><span v-fit="37">Editing</span></div>
      </div>

      <div class="group g-add">
        <div class="gbody row"><div class="big b6"><Ic n="addins" /><span v-fit="42">Add-ins</span></div></div>
        <div class="glabel"><span v-fit="40">Add-ins</span></div>
      </div>

      <div class="group g-pdf">
        <div class="gbody row"><div class="big b7"><Ic n="pdf" :g="7" /><span v-fit="34">Create</span><p><span v-fit="30">a PDF</span></p></div></div>
        <div class="glabel"><span v-fit="77">Adobe Acrobat</span></div>
      </div>
      <div class="collapse"><Ic n="caret" /></div>
    </section>

    <section class="formula">
      <div class="fbox namebox"><span v-fit="16">A1</span><Ic n="tri" /></div>
      <Ic n="dots" :g="14" />
      <div class="fbox fxbox"><Ic n="fxX" /><Ic n="fxOk" /><em>f<small>x</small></em></div>
      <div class="fbox input"><span v-fit="26">card</span><Ic n="chevBold" /></div>
    </section>

    <main class="work">
      <div class="left">
        <div class="gridwrap">
          <div class="sheet">
            <div class="heads">
              <div class="corner"><svg width="26" height="20" viewBox="0 0 26 20"><path d="M22 7v12H10z" fill="#707070" /></svg></div>
              <div v-for="(k, i) in colNames" :key="k" class="head" :style="{ width: colW[i] + 'px' }">{{ k }}</div>
            </div>
            <div v-for="r in 23" :key="r" class="srow">
              <div class="rowno"><span>{{ r }}</span></div>
              <div v-for="(w, k) in colW" :key="k" class="cell" :class="cellClass(r, k)" :style="{ width: w + 'px' }">
                <i v-if="k === 0 && isGroup(r)" class="collapsebox"></i>
                <span v-if="data[r]?.[k]" v-fit="data[r][k].w || 0">{{ data[r][k].t }}</span>
                <i v-if="(k === 1 && r < 4) || (k === 0 && r === 5)" class="drop"><svg width="7" height="4" viewBox="0 0 7 4"><path d="M0 0h7L3.500 4z" fill="#555" /></svg></i>
              </div>
            </div>
            <svg class="chart" width="541" height="289" viewBox="387 242 541 289">
              <defs><linearGradient id="btn" y2="1" x2="0"><stop stop-color="#dcdcdc" /><stop offset="1" stop-color="#bebebe" /></linearGradient></defs>
              <rect x="387.500" y="242.500" width="540" height="288" fill="#fff" stroke="#d4d4d4" />
              <g v-for="b in fieldBtns" :key="b.t">
                <rect :x="b.x" :y="b.y" :width="b.e - b.x - 0.3" height="17" fill="url(#btn)" />
                <text :x="b.tx" :y="b.y + 13" :textLength="b.tw" fill="#111">{{ b.t }}</text>
                <path v-if="b.tri" :d="`M${b.tri - 3.5} ${b.y + 7}h7l-3.500 4z`" fill="#404040" />
              </g>
              <g stroke="#d9d9d9"><path v-for="y in axisY" :key="y" :d="`M431.500 ${y + 0.5}H803.500`" /></g>
              <g fill="#595959" text-anchor="end"><text v-for="(v, i) in axis" :key="v" x="420" :y="axisY[i] + 3" :textLength="String(v).length * 6.1">{{ v }}</text></g>
              <rect v-for="(b, i) in bars" :key="i" :x="b.x" :y="450 - b.hh" :width="b.w" :height="b.hh" :fill="b.f" />
              <g stroke="#d9d9d9"><path v-for="x in edges" :key="x" :d="`M${x + 0.5} 450V496.500`" /></g>
              <g v-for="(k, i) in cats" :key="i" fill="#595959" text-anchor="middle">
                <text :x="(edges[i] + edges[i + 1]) / 2 + 0.5" y="469" :textLength="k[1]">{{ k[0] }}</text>
                <text :x="(edges[i] + edges[i + 1]) / 2 + 0.5" y="492" :textLength="k[3]">{{ k[2] }}</text>
              </g>
              <g v-for="(l, i) in legend" :key="l[0]" fill="#595959">
                <rect x="824" :y="Math.round(349 + i * 22.5)" width="7" height="7" :fill="colors[i]" />
                <text x="833.500" :y="Math.round(356 + i * 22.45)" :textLength="l[1]">{{ l[0] }}</text>
              </g>
              <rect x="884" y="504" width="15" height="17" fill="url(#btn)" /><rect x="900" y="504" width="15" height="17" fill="url(#btn)" />
              <path d="M888 512.500h7M891.500 509v7M904 512.500h7" stroke="#7f7f7f" stroke-width="1.500" />
            </svg>
          </div>
          <div class="vscroll"><div class="sb"><Ic n="triUp" /></div><div class="thumb"></div><div class="gap"></div><div class="sb"><Ic n="tri" /></div></div>
        </div>
        <div class="sheettabs">
          <div class="nav"><Ic n="navL" /><Ic n="navR" :g="24" /></div>
          <div v-for="s in sheets" :key="s[0]" class="stab" :class="{ on: s[0] === 'Sheet6', before: s[0] === 'Sheet3' }"><span v-fit="s[1]">{{ s[0] }}</span></div>
          <Ic n="plusCircle" :g="32" /><Ic n="dots" :g="70" />
          <div class="hscroll"><div class="sb"><Ic n="triL" /></div><div class="hthumb"></div><div class="hgap"></div><div class="sb"><Ic n="triR" /></div></div>
        </div>
      </div>

      <aside class="panel">
        <div class="ptitle"><span v-fit="153">PivotTable Fields</span><Ic n="panelChev" :g="111" /><Ic n="panelX" :g="29" /></div>
        <div class="pchoose"><span v-fit="159">Choose fields to add to report:</span><div class="gearbtn"><Ic n="gear" /><Ic n="tri" /></div></div>
        <div class="psearch"><span v-fit="35">Search</span><Ic n="mag" /></div>
        <div class="plist">
          <div class="pitems">
            <div v-for="f in fields" :key="f[0]" class="pitem"><i><Ic n="check" /></i><b v-fit="f[1]">{{ f[0] }}</b></div>
            <div class="more"><span v-fit="72">More Tables...</span></div>
          </div>
          <div class="pscroll"><div class="sb"><Ic n="triUp" /></div><div class="gap"></div><div class="thumb"></div><div class="sb"><Ic n="tri" /></div></div>
        </div>
        <div class="dotted"></div>
        <div class="drag"><span v-fit="172">Drag fields between areas below:</span></div>
        <div class="areas">
          <div class="area a1">
            <h4><Ic n="funnel" :g="4" /><span v-fit="31">Filters</span></h4>
            <div class="zone scrolls"><div class="chips"><div class="sliver"></div><div class="chip"><span v-fit="17">upi</span><Ic n="tri" /></div><div class="chip"><span v-fit="26">gpay</span><Ic n="tri" /></div></div>
              <div class="mini"><div class="sb"><Ic n="triUp" /></div><div class="thumb"></div><div class="sb"><Ic n="tri" /></div></div></div>
          </div>
          <div class="area a2">
            <h4><Ic n="cols" :g="7" /><span v-fit="48">Columns</span></h4>
            <div class="zone"><div class="chips"><div class="chip top"><Ic n="sigDim" :g="2" /><span v-fit="35" class="vals">Values</span><Ic n="tri" /></div></div></div>
          </div>
          <div class="area a3">
            <h4><Ic n="rowsI" :g="5" /><span v-fit="28">Rows</span></h4>
            <div class="zone"><div class="chips"><div class="chip"><span v-fit="51">cus.name</span><Ic n="tri" /></div><div class="chip"><span v-fit="51">pro.name</span><Ic n="tri" /></div></div></div>
          </div>
          <div class="area a4">
            <h4><Ic n="sig" :g="8" /><span v-fit="34">Values</span></h4>
            <div class="zone scrolls"><div class="chips"><div class="chip"><span v-fit="85">Sum of quantity</span><Ic n="tri" /></div><div class="chip"><span v-fit="67">Sum of price</span><Ic n="tri" /></div></div>
              <div class="mini"><div class="sb"><Ic n="triUp" /></div><div class="thumb"></div><div class="sb"><Ic n="tri" /></div></div></div>
          </div>
        </div>
        <div class="defer"><i></i><span v-fit="108">Defer Layout Update</span><button><span v-fit="38">Update</span></button></div>
      </aside>
    </main>

    <footer class="status">
      <span v-fit="31" class="ready">Ready</span><Ic n="access" :g="19" /><b v-fit="126">Accessibility: Investigate</b>
      <div class="views"><div class="vb on"><Ic n="vGrid" /></div><div class="vb"><Ic n="vPage" /></div><div class="vb"><Ic n="vBreak" /></div></div>
      <Ic n="minus" :g="5" /><div class="slider"><div></div></div><Ic n="plus" :g="5" /><span v-fit="27" class="pct">100%</span>
    </footer>

    <div class="taskbar">
      <div class="weather"><Ic n="weather" /><div><p v-fit="26">27°C</p><p v-fit="72" class="soft">Mostly sunny</p></div></div>
      <Ic n="start" />
      <div class="tsearch"><Ic n="search" /><span v-fit="41">Search</span><Ic n="manta" /></div>
      <Ic n="taskview" :g="12" /><Ic n="chat" :g="20" /><Ic n="chrome" :g="21" /><Ic n="copilot" :g="21" /><Ic n="folder" :g="20" /><Ic n="edge" :g="20" /><Ic n="store" :g="20" /><Ic n="outlook" :g="21" /><Ic n="powerbi" :g="22" />
      <div class="app cu"><Ic n="chromeUser" /><u></u></div>
      <div class="app xl"><Ic n="excel" /><u></u></div>
      <div class="app sn"><Ic n="snip" /><u></u></div>
      <div class="tray"><Ic n="trayUp" /><Ic n="cloud" :g="18" />
        <div class="lang"><span v-fit="23">ENG</span><span v-fit="12">IN</span></div>
        <Ic n="net" :g="17" /><Ic n="vol" :g="7" />
        <div class="clock"><span v-fit="29">13:15</span><span v-fit="63">17-09-2025</span></div>
      </div>
    </div>
  </div>
</template>

<style>
body { margin: 0; overflow: hidden; background: #262626; }
</style>

<style scoped>
* { box-sizing: border-box; }
p, h4 { margin: 0; }
i, em { font-style: normal; }
.screen { width: 1366px; height: 768px; display: flex; flex-direction: column; background: #262626; color: #f2f2f2; font: 11.5px/16px "Open Sans", "Noto Sans", sans-serif; overflow: hidden; }
button { font: inherit; padding: 0; border: 0; }
.row, .line { display: flex; }
.line { align-items: center; }
.pre { white-space: pre; }

.title { height: 34px; display: flex; align-items: center; flex: none; }
.quick { display: flex; align-items: center; margin-left: 22px; width: 359px; margin-top: -1px; }
.book { width: 309px; color: #b5b5b5; padding-top: 1px; }
.tools { background: #232323; width: 185px; height: 34px; padding: 8px 0 0 52px; color: #a5a5a5; }
.signin { margin-left: 239px; width: 58px; height: 19px; background: #b2b2b2; color: #262626; border-radius: 1px; line-height: 18px; }
.win { display: flex; align-items: center; margin-left: 26px; margin-top: -3px; }

.tabs { height: 30px; display: flex; flex: none; }
.tab { padding: 7px 13.500px 0; white-space: nowrap; }
.tab.file { width: 61px; padding: 7px 0 0 20px; color: #b5b5b5; }
.tab.home { width: 58px; padding-left: 12px; background: #363636; margin-right: .5px; }
.tab.ctx { color: #b5b5b5; background: #232323; }
.tab.ctx.first { margin-left: 1px; padding-left: 14.500px; }
.tell { display: flex; gap: 14px; margin-left: 17px; padding-top: 7px; color: #a5a5a5; width: 390px; }
.share { width: 72px; height: 24px; margin-top: 3px; background: #464646; border: 1px solid #6e6e6e; color: #fff; display: flex; align-items: center; padding-left: 4px; gap: 0; font-size: 12px; }
.share b { margin-left: 4px; font-weight: 600; }

.ribbon { height: 93px; background: #363636; display: flex; flex: none; }
.group { display: flex; flex-direction: column; position: relative; }
.group::after { content: ""; position: absolute; right: 0; top: 4px; height: 84px; width: 1px; background: #707070; }
.gbody { height: 75px; flex: none; }
.glabel { display: flex; height: 17px; line-height: 17px; }
.glabel::before { content: ""; flex: 1; }
.glabel::after { content: ""; flex: 1; order: 1; }
.glabel > i { width: 16px; flex: none; padding: 5px 0 0 3.500px; order: 2; }
.g-clip { width: 104px; } .g-font { width: 232px; } .g-align { width: 190px; } .g-num { width: 156px; }
.g-styles { width: 194px; } .g-cells { width: 102px; } .g-edit { width: 151px; } .g-add { width: 63px; } .g-pdf { width: 84px; }
.pastecol { display: flex; flex-direction: column; align-items: center; margin-left: 15px; padding-top: 8px; width: 30px; }
.pastecol .dim { color: #5f5f5f; margin-top: 3px; }
.pastecol > svg:last-child { margin-top: 5px; }
.clipcol { display: flex; flex-direction: column; margin-left: 8px; padding-top: 6px; }
.clipcol .line { margin: 8px 0 9px; }
.r1 { height: 23px; margin-top: 11px; }
.r2 { height: 23px; margin-top: 7px; }
.g-font .line { margin-left: 8px; }
.select { height: 23px; border: 1px solid #696969; background: #444; display: flex; align-items: center; justify-content: space-between; padding: 0 4px 0 2px; color: #fff; }
.s-font { width: 123px; } .s-size { width: 43px; margin-left: 2px; } .s-num { width: 140px; margin-left: 8px; }
.g-num .r2 { margin-left: 8px; }
.alignL { margin-left: 12px; width: 119px; }
.tallsep { width: 1px; background: #666; height: 55px; margin-top: 10px; }
.alignR { margin-left: 7px; }
.big { display: flex; flex-direction: column; align-items: center; padding-top: 8px; white-space: nowrap; }
.big > svg { height: 30px; }
.big > span { margin-top: 3px; }
.big p { display: flex; align-items: center; height: 16px; }
.b1 { width: 72px; margin-left: 9px; } .b2 { width: 60px; } .b3 { width: 44px; }
.b4 { width: 42px; margin-left: 8px; } .b5 { width: 48px; } .b6 { width: 62px; } .b7 { width: 84px; }
.cellrows { padding: 3px 0 0 11px; }
.cellrows .line { height: 23px; }
.cellrows span { margin-left: 3px; }
.editrows { margin-left: 12px; padding-top: 3px; width: 34px; }
.editrows .line { height: 23px; }
.collapse { margin: 82px 0 0 71px; }

.formula { height: 46px; display: flex; align-items: center; flex: none; padding-left: 5px; font-size: 12.500px; }
.fbox { height: 26px; background: #363636; border: 1px solid #484848; display: flex; align-items: center; justify-content: space-between; }
.namebox { width: 102px; padding: 0 6px; }
.fxbox { width: 110px; margin-left: 13px; padding: 0 12px 0 12px; }
.fxbox em { font: italic 700 16px/20px "Liberation Serif", serif; color: #e0e0e0; }
.fxbox small { font-size: 11px; }
.input { width: 1111px; margin-left: 3px; padding: 0 4px 0 11px; }

.work { display: flex; height: 495px; flex: none; }
.left { width: 1016px; display: flex; flex-direction: column; }
.gridwrap { height: 468px; display: flex; }
.sheet { position: relative; width: 994px; height: 468px; overflow: hidden; background: #fff; border-bottom: 1px solid #8c8c8c; font-family: Lato, "Open Sans", sans-serif; flex: none; }
.heads, .srow { display: flex; width: 1100px; height: 20px; }
.corner { width: 26px; background: #262626; height: 20px; }
.head { background: #262626; color: #d0d0d0; text-align: center; font: 12px/19px "Open Sans", sans-serif; border-right: 1px solid #555; border-bottom: 1px solid #6e6e6e; padding-left: 1px; }
.rowno { width: 26px; background: #262626; color: #d0d0d0; text-align: center; font: 12.500px/20px "Open Sans", sans-serif; letter-spacing: -.3px; border-right: 1px solid #777; border-bottom: 1px solid #5a5a5a; }
.cell { border-right: 1px solid #d4d4d4; border-bottom: 1px solid #d4d4d4; color: #000; font-size: 13.200px; line-height: 20px; padding: 0 2px; display: flex; white-space: nowrap; height: 20px; }
.cell.open { border-right-color: transparent; background-clip: border-box; }
.cell.nob { border-bottom-color: transparent; }
.cell.blue { background: #d9e1f2; }
.cell.rule { border-bottom-color: #8ea9db; }
.cell.bold { font-weight: 700; }
.cell.num { justify-content: flex-end; }
.cell.item { padding-left: 28px; }
.collapsebox { width: 9px; height: 9px; margin: 5px 2px 0 2px; border: 1px solid #8f9fb8; background: linear-gradient(#4a5f85, #4a5f85) center / 5px 1px no-repeat #e4ebf5; flex: none; }
.drop { width: 17px; height: 17px; margin: 1px -2px 0 auto; border: 1px solid #a8afb9; background: #fafbfc; display: flex; align-items: center; justify-content: center; flex: none; }
.chart { position: absolute; left: 387px; top: 39px; font: 11.500px Lato, "Open Sans", sans-serif; }
.sb { width: 15px; height: 15px; border: 1px solid #6a6a6a; background: #262626; display: flex; align-items: center; justify-content: center; flex: none; }
.thumb { border: 1px solid #6a6a6a; background: #363636; }
.gap { background: #0a0a0a; }
.vscroll { margin: 2px 0 0 4px; width: 15px; display: flex; flex-direction: column; height: 466px; }
.vscroll .thumb { height: 416px; }
.vscroll .gap { flex: 1; }
.sheettabs { height: 27px; display: flex; align-items: center; font-size: 12px; }
.nav { width: 100px; display: flex; padding-left: 28px; }
.stab { width: 65px; height: 20px; display: flex; justify-content: center; align-items: center; border-right: 1px solid #7a7a7a; margin-bottom: 2px; }
.stab:nth-child(2) { border-left: 1px solid #7a7a7a; }
.stab.before { border-right: 0; }
.stab.on { height: 25px; background: #fff; color: #217346; font-weight: 700; border: 0; border-bottom: 2px solid #217346; align-self: flex-start; margin: -1px 0 0; padding-top: 2px; width: 66px; }
.stab.on + .stab { width: 64.500px; }
.hscroll { display: flex; margin-left: 12.500px; }
.hthumb { width: 290px; border: 1px solid #6a6a6a; background: #363636; }
.hgap { width: 49px; background: #0a0a0a; }

.panel { width: 350px; border-left: 1px solid #555; margin-top: 2px; height: 493px; display: flex; flex-direction: column; padding-left: 13px; font-size: 11.500px; }
.ptitle { display: flex; height: 42px; align-items: center; font-size: 20px; font-weight: 300; line-height: 28px; padding-top: 7px; }
.ptitle svg { margin-top: -7px; }
.pchoose { display: flex; justify-content: space-between; align-items: center; height: 35px; width: 322px; }
.gearbtn { width: 46px; height: 29px; border: 1px solid #696969; background: #363636; display: flex; align-items: center; justify-content: space-between; padding: 0 5px 0 10px; margin-top: 1px; }
.psearch { margin: 10px 0 0 -1px; width: 323px; height: 24px; background: #363636; border: 1px solid #696969; display: flex; align-items: center; justify-content: space-between; padding: 0 3px 0 6px; color: #a8a8a8; flex: none; }
.psearch > span { margin-top: -2px; }
.plist { margin: 16px 0 0 -1px; width: 323px; height: 118px; background: #363636; border: 1px solid #696969; display: flex; overflow: hidden; flex: none; }
.pitems { width: 305px; margin-top: -12px; padding-left: 4px; }
.pitem { height: 21px; display: flex; align-items: center; }
.pitem i { width: 13px; height: 13px; background: #217346; border: 1px solid #4aa06e; display: flex; align-items: center; justify-content: center; margin-top: -2px; }
.pitem b { margin-left: 6px; }
.more { margin-left: -1px; padding-top: 4px; }
.pscroll { width: 15px; margin: 2px 0; display: flex; flex-direction: column; }
.pscroll .gap { height: 38px; }
.pscroll .thumb { flex: 1; }
.dotted { margin: 16px 0 0 1px; width: 325px; height: 1px; background: repeating-linear-gradient(90deg, #a0a0a0 0 1px, transparent 1px 3px); flex: none; }
.drag { margin: 4px 0 0 3px; height: 16px; }
.areas { margin: 16px 0 0 2px; width: 321px; height: 142px; display: grid; grid-template-columns: 160px 161px; grid-template-rows: 71px 71px; flex: none; }
.a1, .a3 { border-right: 1px solid #606060; }
.a1, .a2 { border-bottom: 1px solid #606060; }
.area h4 { font-weight: 400; height: 20px; display: flex; align-items: center; position: relative; }
.area h4 span { margin-left: 8px; }
.a2 h4 span { margin-left: 9px; } .a4 h4 span { margin-left: 9px; }
.a3 h4, .a4 h4 { height: 26px; padding-top: 4px; }
.a1 h4, .a2 h4 { padding-bottom: 2px; }
.zone { height: 44px; width: 153px; background: #333; padding: 2px 1px; display: flex; }
.a2 .zone, .a4 .zone { width: 158px; margin-left: 2px; }
.chips { flex: 1; display: flex; flex-direction: column; gap: 2px; }
.sliver { height: 1px; background: #606060; margin: -2px 0 0; flex: none; }
.chip { height: 19px; border: 1px solid #5c5c5c; background: #363636; display: flex; align-items: center; padding: 0 9px 0 6px; flex: none; }
.chip > svg:last-child { margin-left: auto !important; margin-top: -2px; }
.chip.top { height: 20px; }
.vals { margin-left: 7px; }
.scrolls .mini { margin-left: 2px; width: 15px; height: 40px; display: flex; flex-direction: column; }
.mini .thumb { height: 10px; flex: none; }
.defer { margin: 18px 0 0 5px; display: flex; align-items: center; height: 26px; }
.defer i { width: 13px; height: 13px; border: 1px solid #6e6e6e; background: #303030; margin-right: 7px; }
.defer button { width: 50px; height: 25px; border: 1px solid #565656; background: #262626; color: #6a6a6a; margin-left: 139px; }

.status { height: 23px; border-top: 1px solid #444; border-bottom: 1px solid #50465a; display: flex; align-items: center; padding-left: 11px; flex: none; font-size: 11px; }
.status b { font-size: 10.800px; margin-left: 2px; font-weight: 700; margin-top: -1px; }
.views { display: flex; margin-left: 860px; }
.vb { width: 40px; height: 21px; display: flex; align-items: center; justify-content: center; }
.vb.on { background: #505050; }
.slider { width: 100px; height: 11px; margin-left: 6px; background: linear-gradient(#ddd, #ddd) center / 100% 1px no-repeat; display: flex; justify-content: center; }
.slider div { width: 5px; background: #fff; }
.pct { margin-left: 13px; margin-top: -1px; }

.taskbar { height: 47px; flex: none; display: flex; align-items: center; background: linear-gradient(90deg, #1b242a 0, #17232e 230px, #13213d 390px, #1f1a55 520px, #331a44 590px, #34163f 760px, #3b1243 1000px, #43103f 1100px, #321634 1250px, #291a31 1366px); color: #fff; font-size: 11.500px; }
.weather { display: flex; width: 268px; padding-left: 21px; gap: 7px; align-items: center; }
.weather p { line-height: 16px; display: block !important; width: max-content; margin-top: -1px; margin-bottom: 1px; }
.soft { color: #b9bdc2; }
.tsearch { margin-left: 13px; width: 220px; height: 32px; border-radius: 16px; background: rgba(255, 255, 255, .15); border: 1px solid rgba(255, 255, 255, .12); display: flex; align-items: center; padding: 0 3px 0 11px; font-size: 12.500px; color: #c8ccd2; }
.tsearch span { margin-left: 10px; flex: none; }
.tsearch > svg:last-child { margin-left: auto !important; }
.app { height: 40px; display: flex; flex-direction: column; align-items: center; position: relative; }
.app u { position: absolute; bottom: 1px; width: 6px; height: 3px; border-radius: 2px; background: #a490a6; }
.cu { margin-left: 23px; width: 30px; padding-top: 2px; }
.cu u { left: 9px; }
.xl { margin-left: 14px; width: 24px; padding-top: 8px; }
.sn { margin-left: 12px; width: 40px; padding-top: 8px; background: rgba(255, 255, 255, .08); border-radius: 4px; }
.sn u { width: 16px; background: #d996e4; }
.tray { display: flex; align-items: center; margin-left: 70px; flex: 1; }
.lang { display: flex; flex-direction: column; align-items: center; margin-left: 17px; width: 25px; }
.clock { margin-left: auto; margin-right: 19px; display: flex; flex-direction: column; align-items: flex-end; margin-top: -1px; }
</style>
